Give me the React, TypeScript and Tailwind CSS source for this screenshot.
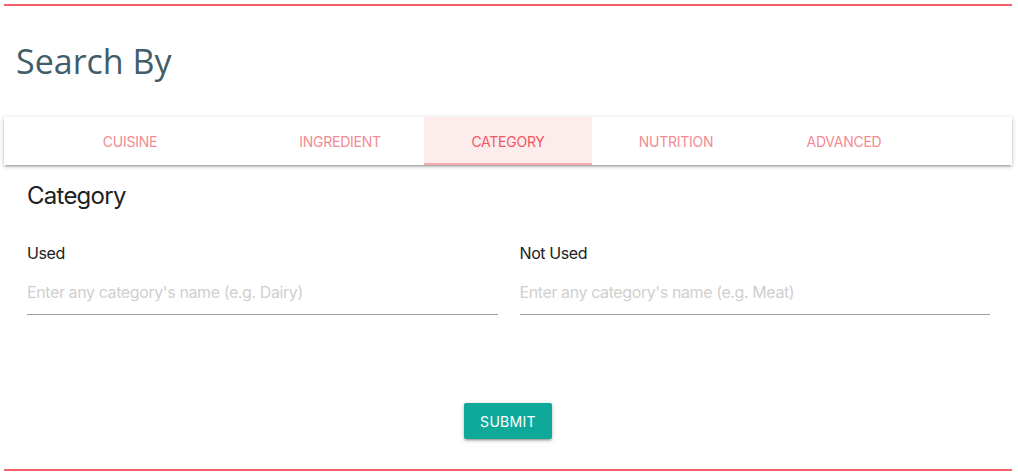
import React from "react";

const tabs = [
  { label: "CUISINE", w: "w-[252px]" },
  { label: "INGREDIENT", w: "w-[168px]" },
  { label: "CATEGORY", w: "w-[168px]", active: true },
  { label: "NUTRITION", w: "w-[168px]" },
  { label: "ADVANCED", w: "w-[168px]" },
];

export default function App() {
  return (
    <div className="w-[1018px] h-[476px] bg-white px-1 pt-1 font-['Inter',sans-serif] overflow-hidden">
      <div className="w-[1008px]">
        <div className="h-[2px] w-full bg-[#f3606c]" />
        <h1 className="mt-[35px] ml-3 h-10 text-[34px] leading-[40px] text-[#435c69] font-['Open_Sans',sans-serif] font-normal">
          Search By
        </h1>
        <div className="mt-[36px] flex h-12 w-full bg-white shadow-[0_2px_2px_0_rgba(0,0,0,0.14),0_3px_1px_-2px_rgba(0,0,0,0.12),0_1px_5px_0_rgba(0,0,0,0.2)]">
          {tabs.map((t) =>
            t.active ? (
              <div
                key={t.label}
                className={`${t.w} relative flex items-center justify-center bg-[#fdecec] text-[14px] tracking-[-0.25px] text-[#ee5865]`}
              >
                {t.label}
                <div className="absolute bottom-0 left-0 right-0 h-[2px] bg-[#f6a8ac]" />
              </div>
            ) : (
              <div
                key={t.label}
                className={`${t.w} flex items-center justify-center text-[14px] tracking-[-0.25px] text-[#f38b93]`}
              >
                {t.label}
              </div>
            )
          )}
        </div>
        <div className="pl-[23px] pr-[22px]">
          <h2 className="mt-[15px] text-[24px] leading-[32px] tracking-[-0.75px] text-[#212121]">Category</h2>
          <div className="mt-[29px] grid grid-cols-2 gap-[22px]">
            <div>
              <div className="text-[16px] leading-6 tracking-[-0.4px] text-[#212121]">Used</div>
              <input
                className="mt-[5px] block h-[45px] w-full border-b border-[#9e9e9e] text-[16px] tracking-[-0.4px] text-[#212121] outline-none placeholder:text-[#cfcfcf]"
                placeholder="Enter any category's name (e.g. Dairy)"
              />
            </div>
            <div>
              <div className="text-[16px] leading-6 tracking-[-0.4px] text-[#212121]">Not Used</div>
              <input
                className="mt-[5px] block h-[45px] w-full border-b border-[#9e9e9e] text-[16px] tracking-[-0.4px] text-[#212121] outline-none placeholder:text-[#cfcfcf]"
                placeholder="Enter any category's name (e.g. Meat)"
              />
            </div>
          </div>
        </div>
        <div className="mt-[88px] flex justify-center">
          <button className="h-9 w-[88px] rounded-[2px] bg-[#0fa99a] text-[14px] tracking-[0.3px] text-white shadow-[0_2px_2px_0_rgba(0,0,0,0.14),0_3px_1px_-2px_rgba(0,0,0,0.12),0_1px_5px_0_rgba(0,0,0,0.2)]">
            SUBMIT
          </button>
        </div>
        <div className="mt-[30px] h-[2px] w-full bg-[#f3606c]" />
      </div>
    </div>
  );
}
